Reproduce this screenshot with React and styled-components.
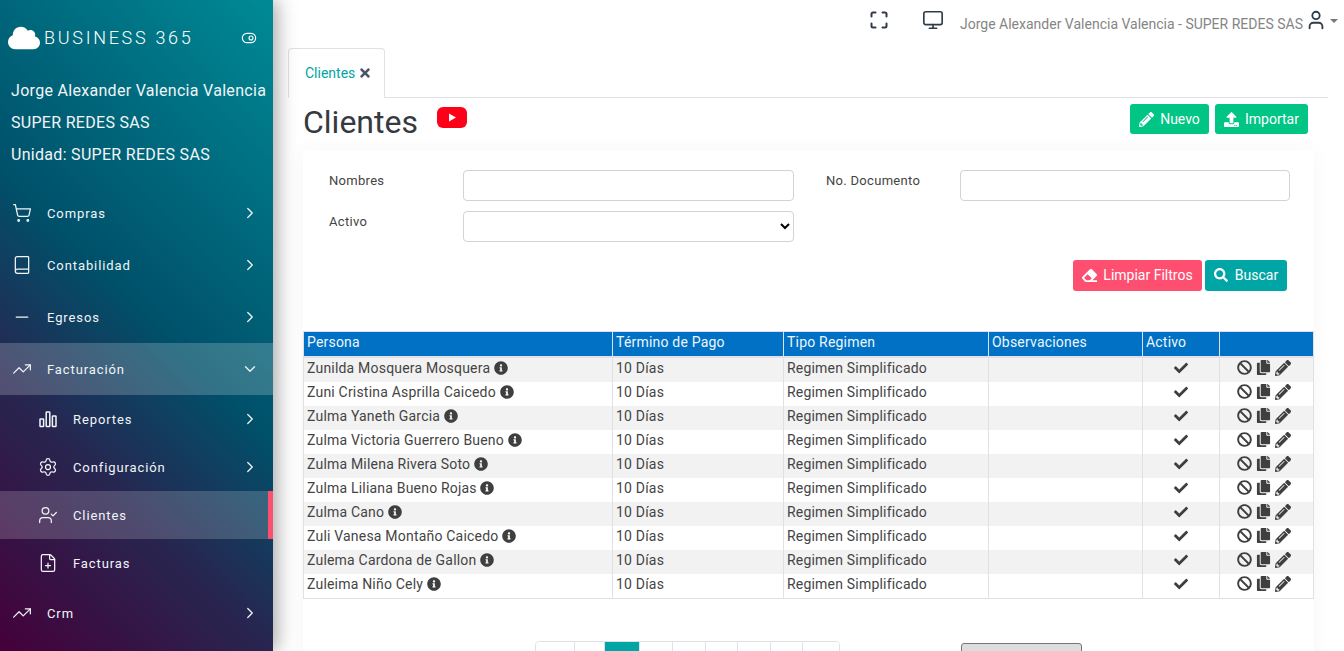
import React from "react";
import styled, { createGlobalStyle } from "styled-components";
import { FaBan, FaCheck, FaCloud, FaCopy, FaEraser, FaInfoCircle, FaPencilAlt, FaSearch, FaTimes, FaUpload } from "react-icons/fa";
import {
  Book,
  ChevronDown,
  ChevronRight,
  FilePlus,
  Minus,
  Monitor,
  Settings,
  ShoppingCart,
  ToggleRight,
  TrendingUp,
  User,
  UserCheck,
} from "lucide-react";

const GlobalStyle = createGlobalStyle`
  html, body {
    margin: 0;
    height: 100%;
    overflow: hidden;
    background: #fff;
    font-family: Roboto, "Liberation Sans", sans-serif;
  }
  * { box-sizing: border-box; }
`;

const Page = styled.div`
  display: flex;
  height: 651px;
  overflow: hidden;
`;

const Sidebar = styled.aside`
  flex: 0 0 273px;
  height: 651px;
  color: #f1f5f7;
  background: linear-gradient(45deg, #45003a 0%, #272650 30%, #00506a 52%, #008a96 100%);
  box-shadow: 4px 0 18px rgba(0, 0, 0, 0.35);
  z-index: 2;
  overflow: hidden;
`;

const Brand = styled.div`
  display: flex;
  align-items: center;
  height: 75px;
  padding: 0 16px 0 8px;
  font-size: 18px;
  font-weight: 300;
  letter-spacing: 2.7px;
  color: #fff;
  svg.cloud { margin-right: 4px; }
  span { flex: 1; }
`;

const UserInfo = styled.div`
  padding: 0 0 0 11px;
  margin-bottom: 16px;
  font-size: 16px;
  line-height: 32px;
  letter-spacing: 0.3px;
  white-space: nowrap;
`;

const Item = styled.div`
  display: flex;
  align-items: center;
  position: relative;
  height: ${({ $h }) => $h}px;
  padding-left: ${({ $sub }) => ($sub ? 38 : 12)}px;
  padding-right: 14px;
  font-size: 13px;
  letter-spacing: 0.9px;
  background: ${({ $open, $current }) =>
    $open ? "rgba(255,255,255,.2)" : $current ? "rgba(255,255,255,.18)" : "transparent"};
  border-right: ${({ $current }) => ($current ? "5px solid #ff4f70" : "none")};
  span { flex: 1; margin-left: 15px; }
  svg.lead { flex: 0 0 20px; }
`;

const Main = styled.main`
  flex: 1;
  min-width: 0;
`;

const TopBar = styled.header`
  display: flex;
  align-items: center;
  height: 48px;
  padding: 0 5px 8px 597px;
  color: #2f3b46;
`;

const TopIcon = styled.div`
  display: flex;
  width: ${({ $w }) => $w}px;
`;

const TopUser = styled.div`
  font-size: 14px;
  color: #858585;
  white-space: nowrap;
  margin: 8px 2px 0 0;
`;

const Caret = styled.i`
  width: 0;
  height: 0;
  margin-left: 3px;
  margin-top: 2px;
  border-left: 4px solid transparent;
  border-right: 4px solid transparent;
  border-top: 4px solid #777;
`;

const Tabs = styled.div`
  display: flex;
  height: 50px;
  margin: 0 16px 0 15px;
  border-bottom: 1px solid #dee2e6;
`;

const Tab = styled.div`
  display: flex;
  align-items: center;
  gap: 3px;
  width: 97px;
  height: 50px;
  padding: 0 0 0 16px;
  font-size: 14px;
  color: #00a5a5;
  background: #fff;
  border: 1px solid #dee2e6;
  border-bottom-color: #fff;
  border-radius: 4px 4px 0 0;
  svg { color: #4b5563; }
`;

const TitleRow = styled.div`
  display: flex;
  justify-content: space-between;
  height: 52px;
  padding: 6px 36px 0 30px;
`;

const Title = styled.h1`
  display: flex;
  margin: 0;
  font-size: 32px;
  line-height: 36px;
  font-weight: 400;
  color: #343a40;
  svg { margin: 3px 0 0 19px; }
`;

const Actions = styled.div`
  display: flex;
  gap: ${({ $gap }) => $gap}px;
`;

const Button = styled.button`
  display: flex;
  align-items: center;
  justify-content: center;
  gap: ${({ $gap }) => $gap || 6}px;
  width: ${({ $w }) => $w}px;
  height: ${({ $h }) => $h}px;
  padding: 0;
  border: 0;
  border-radius: 3px;
  font-family: inherit;
  font-size: 14px;
  color: #fff;
  background: ${({ $bg }) => $bg};
`;

const Card = styled.section`
  margin: 0 30px;
  width: 1011px;
  height: 600px;
  background: #fff;
  box-shadow: 0 0 20px rgba(0, 0, 0, 0.04);
`;

const Form = styled.div`
  display: grid;
  grid-template-columns: 134px 331px 166px 330px;
  row-gap: 10px;
  padding: 20px 0 0 26px;
`;

const Label = styled.label`
  font-size: 13px;
  color: #444;
  letter-spacing: 0.3px;
  padding-top: 3px;
  margin-left: ${({ $second }) => ($second ? 32 : 0)}px;
`;

const Input = styled.input`
  width: 100%;
  height: 31px;
  border: 1px solid #ced4da;
  border-radius: 4px;
  background: #fff;
`;

const Select = styled.select`
  width: 331px;
  height: 31px;
  border: 1px solid #ced4da;
  border-radius: 4px;
  background: #fff;
`;

const FilterActions = styled(Actions)`
  justify-content: flex-end;
  padding: 18px 27px 0 0;
  margin-bottom: 40px;
  button { padding-bottom: 1px; }
`;

const Table = styled.table`
  width: 1011px;
  table-layout: fixed;
  border-collapse: collapse;
  font-size: 14px;
  letter-spacing: 0.2px;
  color: #444;
  border: 1px solid #dee2e6;
`;

const Th = styled.th`
  height: 25px;
  padding: 0 3px 3px;
  text-align: left;
  font-weight: 400;
  color: #eef6fb;
  background: #0071c5;
  border-left: 1px solid #dee2e6;
  border-bottom: 2px solid #dee2e6;
  width: ${({ $w }) => $w}px;
`;

const Tr = styled.tr`
  background: ${({ $odd }) => ($odd ? "#f2f2f2" : "#fff")};
`;

const Td = styled.td`
  height: 24px;
  padding: 0 3px 4px;
  border-left: 1px solid #dee2e6;
  white-space: nowrap;
  line-height: 20px;
  text-align: ${({ $center }) => ($center ? "center" : "left")};
  svg { vertical-align: -2px; color: #3f3f3f; }
`;

const RowIcons = styled.div`
  display: flex;
  justify-content: center;
  align-items: center;
  gap: 4px;
  padding-right: 6px;
  svg { color: #3f3f3f; }
`;

const Footer = styled.div`
  display: flex;
  padding: 42px 0 0 232px;
`;

const Pager = styled.div`
  display: flex;
  height: 30px;
  border: 1px solid #dee2e6;
  border-radius: 4px;
  overflow: hidden;
`;

const PageCell = styled.div`
  width: ${({ $w }) => $w}px;
  background: ${({ $active }) => ($active ? "#00a5a5" : "#fff")};
  border-left: ${({ $first }) => ($first ? "none" : "1px solid #dee2e6")};
`;

const GreyButton = styled.div`
  width: 121px;
  height: 30px;
  margin: 2px 0 0 121px;
  background: #ddd;
  border: 1px solid #777;
  border-radius: 3px;
`;

const clients = [
  "Zunilda Mosquera Mosquera",
  "Zuni Cristina Asprilla Caicedo",
  "Zulma Yaneth Garcia",
  "Zulma Victoria Guerrero Bueno",
  "Zulma Milena Rivera Soto",
  "Zulma Liliana Bueno Rojas",
  "Zulma Cano",
  "Zuli Vanesa Montaño Caicedo",
  "Zulema Cardona de Gallon",
  "Zuleima Niño Cely",
];

const BarsIcon = () => (
  <svg className="lead" width="20" height="20" viewBox="0 0 20 20" fill="none" stroke="currentColor" strokeWidth="1.5">
    <rect x="2" y="10" width="3.6" height="7.5" rx="0.6" />
    <rect x="8.2" y="3" width="3.6" height="14.5" rx="0.6" />
    <rect x="14.4" y="7" width="3.6" height="10.5" rx="0.6" />
  </svg>
);

const FullscreenIcon = () => (
  <svg width="18" height="18" viewBox="0 0 18 18" fill="none" stroke="currentColor" strokeWidth="2" strokeLinecap="round">
    <path d="M1.5 5.5V3a1.5 1.5 0 0 1 1.5-1.5h2.5M12.5 1.5H15A1.5 1.5 0 0 1 16.5 3v2.5M16.5 12.5V15a1.5 1.5 0 0 1-1.5 1.5h-2.5M5.5 16.5H3A1.5 1.5 0 0 1 1.5 15v-2.5" />
  </svg>
);

const YoutubeIcon = () => (
  <svg width="30" height="21" viewBox="0 0 30 21">
    <rect width="30" height="21" rx="6" fill="#ff0019" />
    <path d="M12 6.5l7 4-7 4z" fill="#fff" />
  </svg>
);

const MenuItem = ({ icon: Icon, label, h = 52, sub, open, current, arrow = true, custom }) => (
  <Item $h={h} $sub={sub} $open={open} $current={current}>
    {custom || <Icon className="lead" size={20} strokeWidth={1.5} />}
    <span>{label}</span>
    {arrow &&
      (open ? (
        <ChevronDown size={18} strokeWidth={1.7} />
      ) : (
        <ChevronRight size={18} strokeWidth={1.7} />
      ))}
  </Item>
);

export default function App() {
  return (
    <Page>
      <GlobalStyle />
      <Sidebar>
        <Brand>
          <FaCloud className="cloud" size={32} />
          <span>BUSINESS 365</span>
          <ToggleRight size={16} strokeWidth={1.7} />
        </Brand>
        <UserInfo>
          <div>Jorge Alexander Valencia Valencia</div>
          <div>SUPER REDES SAS</div>
          <div>Unidad: SUPER REDES SAS</div>
        </UserInfo>
        <MenuItem icon={ShoppingCart} label="Compras" />
        <MenuItem icon={Book} label="Contabilidad" />
        <MenuItem icon={Minus} label="Egresos" />
        <MenuItem icon={TrendingUp} label="Facturación" open />
        <MenuItem custom={<BarsIcon />} label="Reportes" h={48} sub />
        <MenuItem icon={Settings} label="Configuración" h={48} sub />
        <MenuItem icon={UserCheck} label="Clientes" h={48} sub current arrow={false} />
        <MenuItem icon={FilePlus} label="Facturas" h={48} sub arrow={false} />
        <MenuItem icon={TrendingUp} label="Crm" />
      </Sidebar>
      <Main>
        <TopBar>
          <TopIcon $w={52}>
            <FullscreenIcon />
          </TopIcon>
          <TopIcon $w={38}>
            <Monitor size={22} strokeWidth={1.8} />
          </TopIcon>
          <TopUser>Jorge Alexander Valencia Valencia - SUPER REDES SAS</TopUser>
          <User size={22} strokeWidth={2} />
          <Caret />
        </TopBar>
        <Tabs>
          <Tab>
            Clientes <FaTimes size={14} />
          </Tab>
        </Tabs>
        <TitleRow>
          <Title>
            Clientes
            <YoutubeIcon />
          </Title>
          <Actions $gap={6}>
            <Button $w={79} $h={30} $bg="#00c584">
              <FaPencilAlt size={15} /> Nuevo
            </Button>
            <Button $w={93} $h={30} $bg="#00c584">
              <FaUpload size={15} /> Importar
            </Button>
          </Actions>
        </TitleRow>
        <Card>
          <Form>
            <Label>Nombres</Label>
            <Input />
            <Label $second>No. Documento</Label>
            <Input />
            <Label>Activo</Label>
            <Select />
          </Form>
          <FilterActions $gap={3}>
            <Button $w={129} $h={31} $bg="#ff4f70">
              <FaEraser size={15} /> Limpiar Filtros
            </Button>
            <Button $w={82} $h={31} $bg="#00a5a5" $gap={7}>
              <FaSearch size={14} /> Buscar
            </Button>
          </FilterActions>
          <Table>
            <thead>
              <tr>
                <Th $w={309}>Persona</Th>
                <Th $w={171}>Término de Pago</Th>
                <Th $w={205}>Tipo Regimen</Th>
                <Th $w={154}>Observaciones</Th>
                <Th $w={77}>Activo</Th>
                <Th />
              </tr>
            </thead>
            <tbody>
              {clients.map((name, i) => (
                <Tr key={name} $odd={i % 2 === 0}>
                  <Td>
                    {name} <FaInfoCircle size={14} />
                  </Td>
                  <Td>10 Días</Td>
                  <Td>Regimen Simplificado</Td>
                  <Td />
                  <Td $center>
                    <FaCheck size={14} />
                  </Td>
                  <Td>
                    <RowIcons>
                      <FaBan size={15} />
                      <FaCopy size={15} />
                      <FaPencilAlt size={16} />
                    </RowIcons>
                  </Td>
                </Tr>
              ))}
            </tbody>
          </Table>
          <Footer>
            <Pager>
              {[38, 30, 35, 33, 33, 32, 33, 32, 37].map((w, i) => (
                <PageCell key={i} $w={w} $first={i === 0} $active={i === 2} />
              ))}
            </Pager>
            <GreyButton />
          </Footer>
        </Card>
      </Main>
    </Page>
  );
}
